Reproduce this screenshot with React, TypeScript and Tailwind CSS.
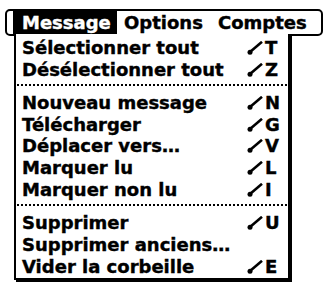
import React from 'react';

type Item = { label: string; key?: string } | 'sep';

const items: Item[] = [
  { label: 'Sélectionner tout', key: 'T' },
  { label: 'Désélectionner tout', key: 'Z' },
  'sep',
  { label: 'Nouveau message', key: 'N' },
  { label: 'Télécharger', key: 'G' },
  { label: 'Déplacer vers…', key: 'V' },
  { label: 'Marquer lu', key: 'L' },
  { label: 'Marquer non lu', key: 'I' },
  'sep',
  { label: 'Supprimer', key: 'U' },
  { label: 'Supprimer anciens…' },
  { label: 'Vider la corbeille', key: 'E' },
];

// Palm "command stroke" glyph
function Stroke() {
  return (
    <svg width="16" height="14" viewBox="0 0 16 14" className="shrink-0">
      <line x1="3" y1="11" x2="15" y2="0.8" stroke="#000" strokeWidth="2.6" />
      <circle cx="3" cy="11.3" r="2.5" fill="#000" />
    </svg>
  );
}

export default function App() {
  return (
    <div
      className="w-[329px] h-[282px] bg-white text-black overflow-hidden pt-[9px]"
      style={{ fontFamily: '"DejaVu Sans", Verdana, sans-serif' }}
    >
      {/* barre de menus */}
      <div className="ml-[5px] w-[318px] h-[27px] border-2 border-black rounded-[5px] flex items-stretch text-[18px] font-bold leading-none [-webkit-text-stroke:0.4px_#000]">
        <div className="w-[104px] ml-[6px] bg-black text-white flex items-center pl-[9px] [-webkit-text-stroke:0.4px_#fff]">Message</div>
        <div className="flex items-center pl-[7px] w-[101px]">Options</div>
        <div className="flex items-center">Comptes</div>
      </div>

      {/* menu déroulant */}
      <div className="ml-[14px] -mt-[2px] w-[276px] border-x-2 border-b-2 border-black shadow-[2px_2px_0_#000] bg-white pt-[3px] pl-[6px] pr-[7px] text-[18px] font-bold leading-none [-webkit-text-stroke:0.4px_#000]">
        {items.map((it, i) =>
          it === 'sep' ? (
            <div key={i} className="h-[11.5px] pt-[3px] -ml-[5px] -mr-[6px]">
              <div className="w-full h-[2px] bg-[repeating-linear-gradient(90deg,#000_0_2px,transparent_2px_4px)]" />
            </div>
          ) : (
            <div key={i} className="h-[21.75px] grid grid-cols-[1fr_34px] items-center whitespace-nowrap">
              <span>{it.label}</span>
              {it.key ? (
                <span className="flex items-center gap-[2px]">
                  <Stroke />
                  <span>{it.key}</span>
                </span>
              ) : (
                <span />
              )}
            </div>
          )
        )}
      </div>
    </div>
  );
}
